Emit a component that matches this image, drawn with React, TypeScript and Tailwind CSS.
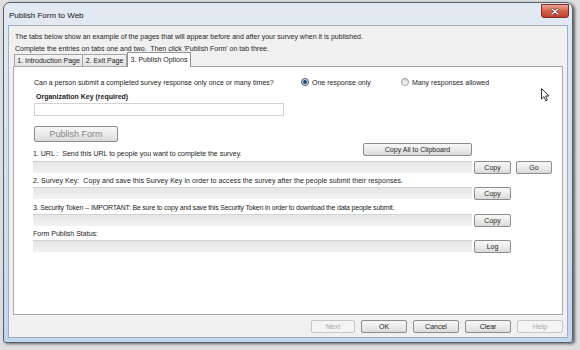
import type { ReactNode } from "react";

const btn =
  "flex items-center justify-center rounded-[2px] border border-[#8d8d8d] bg-linear-to-b from-[#f7f7f7] via-[#ececec] to-[#d9d9d9] text-[7px] leading-none text-[#1e1e1e]";
const btnOff =
  "flex items-center justify-center rounded-[2px] border border-[#c6c6c6] bg-[#f4f4f4] text-[7px] leading-none text-[#a8a8a8]";
const field = "h-[12px] flex-1 border-t border-[#d2d2d2] bg-linear-to-b from-[#e6e6e6] to-[#f2f2f2]";

function Radio({ checked }: { checked?: boolean }) {
  return (
    <span
      className={
        "flex h-[8px] w-[8px] items-center justify-center rounded-full border " +
        (checked ? "border-[#3b5878] bg-[#dfe8f2]" : "border-[#9a9a9a] bg-linear-to-b from-[#dadada] to-[#fafafa]")
      }
    >
      {checked && <span className="h-[4px] w-[4px] rounded-full bg-[#1f3f66]" />}
    </span>
  );
}

function Field({ label, gap, children }: { label: ReactNode; gap: string; children: ReactNode }) {
  return (
    <>
      <div className={"h-[10px] whitespace-nowrap pl-[19px] text-[7px] leading-[10px] " + gap}>{label}</div>
      <div className="mt-[1px] flex items-start pl-[19px]">
        <div className="flex w-[439px]">
          <div className={field} />
        </div>
        <div className="ml-[2px] flex gap-[5px]">{children}</div>
      </div>
    </>
  );
}

export default function App() {
  return (
    <div className="relative h-[350px] w-[580px] overflow-hidden bg-[#dedede] pl-[3px] pt-[2px] font-['Liberation_Sans',Arial,sans-serif] text-[#1c1c1c]">
      <div className="flex h-[341px] w-[570px] flex-col rounded-t-[7px] rounded-b-[3px] border border-[#55606c] bg-linear-to-b from-[#e3eaf3] to-[#c3d6ed] shadow-[2px_1px_3px_rgba(0,0,0,0.55)]">
        {/* title bar */}
        <div className="flex h-[22px] items-start justify-between pl-[5px] pr-[3px]">
          <span className="mt-[8px] text-[8px] leading-[10px] text-[#111]">Publish Form to Web</span>
          <div className="mt-[1px] flex h-[14px] w-[28px] items-center justify-center rounded-b-[3px] border border-[#7a2c22] bg-linear-to-b from-[#eaa596] via-[#d2604a] to-[#c2402c]">
            <svg width="8" height="7" viewBox="0 0 8 7">
              <path d="M1 1 L7 6 M7 1 L1 6" stroke="#5a1a12" strokeWidth="2.6" strokeLinecap="round" />
              <path d="M1 1 L7 6 M7 1 L1 6" stroke="#ffffff" strokeWidth="1.5" strokeLinecap="round" />
            </svg>
          </div>
        </div>

        {/* client area */}
        <div className="mx-[4px] mb-[4px] flex flex-1 flex-col border border-[#9eacbb] bg-[#f0f0f0]">
          <div className="pl-[6px] pt-[5px] text-[7px] leading-[12px] text-[#262626]">
            <p>The tabs below show an example of the pages that will appear before and after your survey when it is published.</p>
            <p>Complete the entries on tabs one and two.&nbsp; Then click 'Publish Form' on tab three.</p>
          </div>

          {/* tabs */}
          <div className="relative z-10 mt-[-3px] flex h-[14px] items-end pl-[5px] text-[7px] leading-none">
            <div className="flex h-[12px] w-[69px] items-center justify-center border border-b-0 border-[#a3a3a3] bg-linear-to-b from-[#f3f3f3] to-[#e2e2e2]">
              1. Introduction Page
            </div>
            <div className="flex h-[12px] w-[44px] items-center justify-center border border-b-0 border-l-0 border-[#a3a3a3] bg-linear-to-b from-[#f3f3f3] to-[#e2e2e2]">
              2. Exit Page
            </div>
            <div className="-mb-[1px] flex h-[15px] w-[64px] items-center justify-center border border-b-0 border-[#929292] bg-white pb-[2px]">
              3. Publish Options
            </div>
          </div>

          {/* tab panel */}
          <div className="mx-[4px] flex h-[249px] flex-col border border-[#a9a9a9] bg-white text-[7px]">
            <div className="mt-[10px] flex h-[10px] items-center pl-[20px] leading-none">
              <span className="w-[267px]">Can a person submit a completed survey response only once or many times?</span>
              <label className="flex w-[100px] items-center gap-[3px]">
                <Radio checked />
                <span>One response only</span>
              </label>
              <label className="flex items-center gap-[3px]">
                <Radio />
                <span>Many responses allowed</span>
              </label>
            </div>

            <div className="mt-[5px] h-[10px] pl-[22px] text-[7px] font-bold leading-[10px]">Organization Key (required)</div>
            <div className="ml-[20px] mt-[1px] h-[13px] w-[250px] border border-[#d3d3d3] bg-white" />

            <button className={btn + " ml-[20px] mt-[10px] h-[16px] w-[84px] text-[9px] text-[#858585]"}>Publish Form</button>

            <div className="ml-[19px] mt-[1px] flex h-[13px] w-[439px] items-start justify-between">
              <span className="mt-[6px] leading-[10px]">1. URL :&nbsp; Send this URL to people you want to complete the survey.</span>
              <button className={btn + " h-[13px] w-[109px]"}>Copy All to Clipboard</button>
            </div>
            <div className="mt-[5px] flex items-start pl-[19px]">
              <div className="flex w-[439px]">
                <div className={field} />
              </div>
              <div className="ml-[2px] flex gap-[5px]">
                <button className={btn + " h-[13px] w-[37px]"}>Copy</button>
                <button className={btn + " h-[13px] w-[36px]"}>Go</button>
              </div>
            </div>

            <Field
              label={<span className="tracking-[0.06px]">2. Survey Key:&nbsp; Copy and save this Survey Key in order to access the survey after the people submit their responses.</span>}
              gap="mt-[2px]"
            >
              <button className={btn + " h-[13px] w-[37px]"}>Copy</button>
            </Field>
            <Field
              label={<span className="tracking-[-0.2px]">3. Security Token -- IMPORTANT: Be sure to copy and save this Security Token in order to download the data people submit.</span>}
              gap="mt-[3px]"
            >
              <button className={btn + " h-[13px] w-[37px]"}>Copy</button>
            </Field>
            <Field label="Form Publish Status:" gap="mt-[2px]">
              <button className={btn + " h-[13px] w-[37px]"}>Log</button>
            </Field>
          </div>

          {/* dialog buttons */}
          <div className="mt-[5px] flex justify-end gap-[6px] pr-[4px]">
            <button className={btnOff + " h-[13px] w-[44px]"}>Next</button>
            <button className={btn + " h-[13px] w-[46px]"}>OK</button>
            <button className={btn + " h-[13px] w-[46px]"}>Cancel</button>
            <button className={btn + " h-[13px] w-[46px]"}>Clear</button>
            <button className={btnOff + " h-[13px] w-[46px]"}>Help</button>
          </div>
        </div>
      </div>

      {/* mouse pointer */}
      <svg className="absolute left-[541px] top-[88px]" width="9" height="14" viewBox="0 0 9 14">
        <path d="M0.5 0.5 L0.5 11 L3 8.6 L4.8 12.8 L6.4 12.1 L4.7 8 L8 8 Z" fill="#ffffff" stroke="#222" strokeWidth="0.9" strokeLinejoin="round" />
      </svg>
    </div>
  );
}
